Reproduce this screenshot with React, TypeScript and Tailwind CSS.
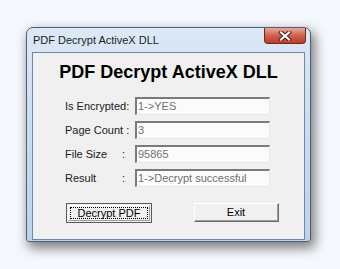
import React from "react";

const font = { fontFamily: '"Liberation Sans", Arial, sans-serif' };

function Field({ value }: { value: string }) {
  return (
    <div className="w-[135px] h-[18px] border-t-2 border-l-2 border-b border-r border-t-[#7a7a7a] border-l-[#7a7a7a] border-b-[#e6e6e6] border-r-[#e6e6e6] bg-[#fbfbfb] flex items-center pl-[1px] text-[11px] text-[#707070] leading-none">
      {value}
    </div>
  );
}

export default function App() {
  return (
    <div
      className="w-[340px] h-[269px] bg-[#f5f8fc] pt-[27px] pl-[26px] overflow-hidden"
      style={font}
    >
      <div className="w-[285px] h-[215px] rounded-t-[7px] rounded-b-[3px] border border-[#4e5f72] bg-gradient-to-b from-[#dce9f6] via-[#c9dcf0] to-[#bcd3ec] shadow-[3px_5px_12px_1px_rgba(0,0,0,0.5)] flex flex-col px-[5px] pb-[1px]">
        <div className="h-[24px] flex justify-between shrink-0">
          <div className="pl-[1px] pt-[5px] text-[11px] text-[#1c1c1c] leading-[14px]">
            PDF Decrypt ActiveX DLL
          </div>
          <div className="w-[42px] h-[16px] -mr-[1px] rounded-b-[4px] border border-t-0 border-[#6a2a22] bg-gradient-to-b from-[#e8a898] via-[#d0604c] to-[#c23a26] flex items-center justify-center">
            <svg width="14" height="10" viewBox="0 0 14 10">
              <path d="M3 1.5 L11 8.5 M11 1.5 L3 8.5" stroke="#4a1a14" strokeWidth="4" strokeLinecap="square" />
              <path d="M3 1.5 L11 8.5 M11 1.5 L3 8.5" stroke="#ffffff" strokeWidth="2.2" strokeLinecap="square" />
            </svg>
          </div>
        </div>
        <div className="flex-1 border border-[#7088a6] bg-[#f0f0f0] flex flex-col">
          <div className="mt-[9px] text-center text-[18px] font-bold leading-[20px] text-black">
            PDF Decrypt ActiveX DLL
          </div>
          <div className="mt-[15px] pl-[32px] flex flex-col gap-[6px] text-[11px] text-[#202020]">
            <div className="flex items-center">
              <div className="w-[70px]">Is Encrypted:</div>
              <Field value="1->YES" />
            </div>
            <div className="flex items-center">
              <div className="w-[70px]">Page Count :</div>
              <Field value="3" />
            </div>
            <div className="flex items-center">
              <div className="w-[70px]">
                <div className="w-[60px] flex justify-between">
                  <span>File Size</span>
                  <span>:</span>
                </div>
              </div>
              <Field value="95865" />
            </div>
            <div className="flex items-center">
              <div className="w-[70px]">
                <div className="w-[60px] flex justify-between">
                  <span>Result</span>
                  <span>:</span>
                </div>
              </div>
              <Field value="1->Decrypt successful" />
            </div>
          </div>
          <div className="mt-[16px] pl-[33px] flex items-start gap-[42px] text-[11px] text-black">
            <div className="w-[86px] h-[20px] border border-[#5a5a5a] bg-[#f0f0f0] p-[1px]">
              <div className="w-full h-full border border-t-white border-l-white border-b-[#a0a0a0] border-r-[#a0a0a0] p-[1px]">
                <div className="w-full h-full border border-dotted border-black flex items-center justify-center leading-none">
                  Decrypt PDF
                </div>
              </div>
            </div>
            <div className="w-[85px] h-[19px] border border-t-white border-l-white border-b-[#696969] border-r-[#696969] bg-[#f0f0f0]">
              <div className="w-full h-full border-b border-r border-b-[#a0a0a0] border-r-[#a0a0a0] flex items-center justify-center leading-none">
                Exit
              </div>
            </div>
          </div>
        </div>
      </div>
    </div>
  );
}
